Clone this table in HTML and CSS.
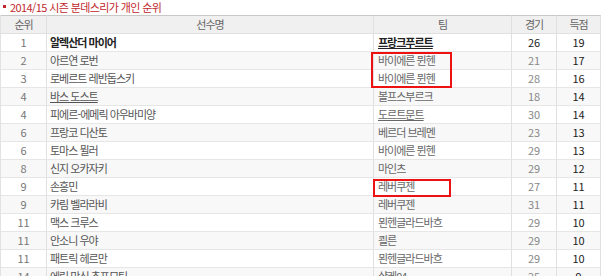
FILE: index.html
```html
<!DOCTYPE html>
<html lang="ko">
<head>
<meta charset="utf-8">
<link rel="stylesheet" href="styles.css">
</head>
<body>
<div class="page">
  <h3 class="title"><span class="bullet"></span><span class="title-text">2014/15 시즌 분데스리가 개인 순위</span></h3>
  <div class="wrap">
    <table class="rank">
      <colgroup>
        <col class="c-rank"><col class="c-name"><col class="c-team"><col class="c-games"><col class="c-goals">
      </colgroup>
      <thead>
        <tr><th>순위</th><th>선수명</th><th>팀</th><th>경기</th><th>득점</th></tr>
      </thead>
      <tbody>
        <tr class="top"><td class="r">1</td><td class="n">알렉산더 마이어</td><td class="t"><u>프랑크푸르트</u></td><td class="g">26</td><td class="s">19</td></tr>
        <tr><td class="r">2</td><td class="n">아르연 로번</td><td class="t">바이에른 뮌헨</td><td class="g">21</td><td class="s">17</td></tr>
        <tr><td class="r">3</td><td class="n">로베르트 레반돕스키</td><td class="t">바이에른 뮌헨</td><td class="g">28</td><td class="s">16</td></tr>
        <tr><td class="r">4</td><td class="n"><u>바스 도스트</u></td><td class="t">볼프스부르크</td><td class="g">18</td><td class="s">14</td></tr>
        <tr><td class="r">4</td><td class="n">피에르-에메릭 아우바미양</td><td class="t"><u>도르트문트</u></td><td class="g">30</td><td class="s">14</td></tr>
        <tr><td class="r">6</td><td class="n">프랑코 디산토</td><td class="t">베르더 브레멘</td><td class="g">23</td><td class="s">13</td></tr>
        <tr><td class="r">6</td><td class="n">토마스 뮐러</td><td class="t">바이에른 뮌헨</td><td class="g">29</td><td class="s">13</td></tr>
        <tr><td class="r">8</td><td class="n">신지 오카자키</td><td class="t">마인츠</td><td class="g">29</td><td class="s">12</td></tr>
        <tr><td class="r">9</td><td class="n">손흥민</td><td class="t">레버쿠젠</td><td class="g">27</td><td class="s">11</td></tr>
        <tr><td class="r">9</td><td class="n">카림 벨라라비</td><td class="t">레버쿠젠</td><td class="g">31</td><td class="s">11</td></tr>
        <tr><td class="r">11</td><td class="n">맥스 크루스</td><td class="t">묀헨글라드바흐</td><td class="g">29</td><td class="s">10</td></tr>
        <tr><td class="r">11</td><td class="n">안소니 우야</td><td class="t">쾰른</td><td class="g">29</td><td class="s">10</td></tr>
        <tr><td class="r">11</td><td class="n">패트릭 헤르만</td><td class="t">묀헨글라드바흐</td><td class="g">29</td><td class="s">10</td></tr>
        <tr><td class="r">14</td><td class="n">에릭 막심 추포모팅</td><td class="t">샬케04</td><td class="g">25</td><td class="s">9</td></tr>
      </tbody>
    </table>
    <div class="mark mark-1"></div>
    <div class="mark mark-2"></div>
  </div>
</div>
</body>
</html>
```
FILE: styles.css
```css
html, body {
  margin: 0;
  padding: 0;
  background: #fff;
}
body {
  font-family: "Noto Sans CJK KR", "Noto Sans", sans-serif;
  font-size: 11px;
  color: #555;
  overflow: hidden;
}
.page {
  width: 605px;
}
.title {
  margin: 0;
  height: 15px;
  font-size: 11px;
  font-weight: normal;
  color: #c1272d;
  letter-spacing: -0.6px;
  display: flex;
  align-items: center;
  padding-left: 3px;
  box-sizing: border-box;
}
.title-text {
  line-height: 14px;
  margin-top: -2px;
}
.bullet {
  width: 3px;
  height: 3px;
  background: #c1272d;
  margin: -2px 4px 0 0;
  flex: none;
}
.wrap {
  position: relative;
  width: 601px;
}
.rank {
  width: 601px;
  border-collapse: separate;
  border-spacing: 0;
  table-layout: fixed;
  border-left: 1px solid #e2e2e2;
}
.c-rank { width: 46px; }
.c-name { width: 327px; }
.c-team { width: 138px; }
.c-games { width: 45px; }
.c-goals { width: 44px; }
.rank th, .rank td {
  padding: 0;
  border-right: 1px solid #e0e0e0;
  border-bottom: 1px solid #e6e6e6;
  line-height: 17px;
  height: 17px;
  white-space: nowrap;
  overflow: hidden;
  letter-spacing: -1px;
}
.rank th {
  background: #f0f0f0;
  border-top: 1px solid #c8c8c8;
  border-bottom: 1px solid #e0e0e0;
  font-weight: normal;
  color: #666;
  text-align: center;
}
.rank tbody tr:nth-child(even) td {
  background: #f8f8f8;
}
.rank td.r {
  text-align: center;
  color: #777;
  letter-spacing: 0;
}
.rank td.n {
  padding-left: 3px;
  color: #555;
}
.rank td.t {
  padding-left: 4px;
  color: #666;
}
.rank td.g {
  text-align: center;
  color: #888;
  letter-spacing: 0;
}
.rank td.s {
  text-align: center;
  color: #222;
  letter-spacing: 0;
}
.rank tr.top td.n,
.rank tr.top td.t {
  color: #222;
  font-weight: 600;
}
.rank tr.top td.g {
  color: #222;
}
.rank u {
  text-decoration: underline;
}
.mark {
  position: absolute;
  border: 2px solid #ee1111;
  box-sizing: border-box;
  pointer-events: none;
}
.mark-1 {
  left: 371px;
  top: 37px;
  width: 81px;
  height: 36px;
}
.mark-2 {
  left: 373px;
  top: 164px;
  width: 78px;
  height: 18px;
}
```
